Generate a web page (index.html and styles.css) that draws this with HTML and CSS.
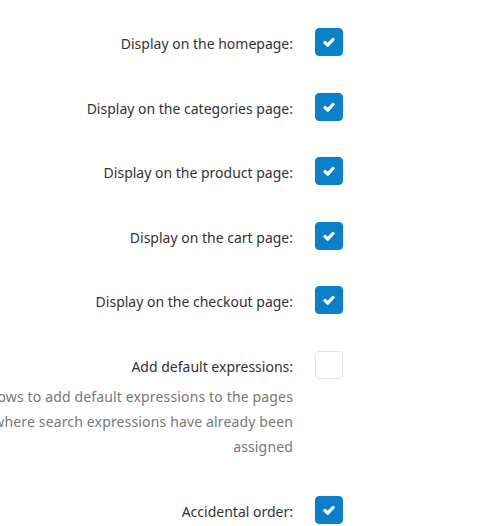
FILE: index.html
```html
<!DOCTYPE html>
<html lang="en">
<head>
    <meta charset="UTF-8">
    <meta name="viewport" content="width=device-width, initial-scale=1.0">
    <title>Search expressions settings</title>
    <link rel="stylesheet" href="styles.css">
</head>
<body>
    <form class="settings">
        <div class="form-row">
            <label class="control-label">Display on the homepage:</label>
            <span class="check checked"><svg viewBox="0 0 16 16"><path d="M4 8.5l2.7 2.7 5.3-5.7"/></svg></span>
        </div>
        <div class="form-row">
            <label class="control-label">Display on the categories page:</label>
            <span class="check checked"><svg viewBox="0 0 16 16"><path d="M4 8.5l2.7 2.7 5.3-5.7"/></svg></span>
        </div>
        <div class="form-row">
            <label class="control-label">Display on the product page:</label>
            <span class="check checked"><svg viewBox="0 0 16 16"><path d="M4 8.5l2.7 2.7 5.3-5.7"/></svg></span>
        </div>
        <div class="form-row">
            <label class="control-label">Display on the cart page:</label>
            <span class="check checked"><svg viewBox="0 0 16 16"><path d="M4 8.5l2.7 2.7 5.3-5.7"/></svg></span>
        </div>
        <div class="form-row">
            <label class="control-label">Display on the checkout page:</label>
            <span class="check checked"><svg viewBox="0 0 16 16"><path d="M4 8.5l2.7 2.7 5.3-5.7"/></svg></span>
        </div>
        <div class="form-row">
            <label class="control-label">Add default expressions:</label>
            <span class="check"></span>
            <p class="help">Allows to add default expressions to the pages where search expressions have already been assigned</p>
        </div>
        <div class="form-row">
            <label class="control-label">Accidental order:</label>
            <span class="check checked"><svg viewBox="0 0 16 16"><path d="M4 8.5l2.7 2.7 5.3-5.7"/></svg></span>
        </div>
    </form>
</body>
</html>
```

FILE: styles.css
```css
body {
    font-family: "Noto Sans", "Open Sans", sans-serif;
    font-size: 14px;
    color: #333;
    margin: 0;
    padding: 0;
    background-color: #fff;
    overflow: hidden;
}
.settings {
    margin: 28px 0 0 -37px;
}
.form-row {
    display: grid;
    grid-template-columns: 330px 28px;
    column-gap: 22px;
    align-items: center;
    margin-bottom: 36.6px;
}
.control-label {
    text-align: right;
    line-height: 20px;
    padding-top: 4px;
}
.check {
    width: 28px;
    height: 28px;
    box-sizing: border-box;
    border: 1px solid #e3e3e3;
    border-radius: 4px;
    background-color: #fff;
    display: flex;
    align-items: center;
    justify-content: center;
}
.check.checked {
    background-color: #0b80c8;
    border-color: #0b80c8;
}
.check svg {
    width: 16px;
    height: 16px;
    fill: none;
    stroke: #fff;
    stroke-width: 3.2;
    stroke-linecap: round;
    stroke-linejoin: round;
}
.help {
    grid-column: 1;
    margin: 5px 0 0 0;
    text-align: right;
    color: #777;
    line-height: 25px;
    letter-spacing: 0.15px;
}
```
